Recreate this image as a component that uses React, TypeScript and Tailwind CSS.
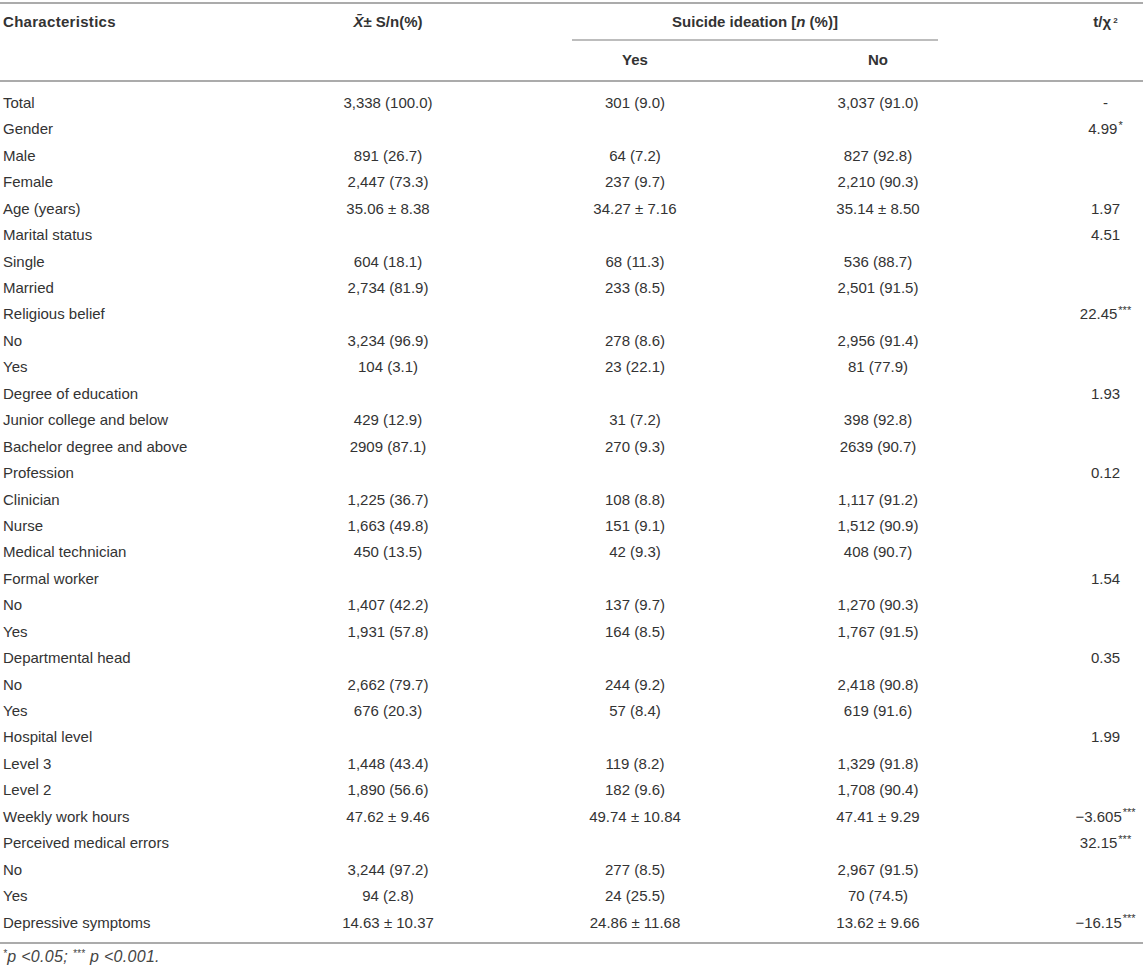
import React from 'react'

type Row = [string, string, string, string, string]

const rows: Row[] = [
  ['Total', '3,338 (100.0)', '301 (9.0)', '3,037 (91.0)', '-'],
  ['Gender', '', '', '', '4.99*'],
  ['Male', '891 (26.7)', '64 (7.2)', '827 (92.8)', ''],
  ['Female', '2,447 (73.3)', '237 (9.7)', '2,210 (90.3)', ''],
  ['Age (years)', '35.06 ± 8.38', '34.27 ± 7.16', '35.14 ± 8.50', '1.97'],
  ['Marital status', '', '', '', '4.51'],
  ['Single', '604 (18.1)', '68 (11.3)', '536 (88.7)', ''],
  ['Married', '2,734 (81.9)', '233 (8.5)', '2,501 (91.5)', ''],
  ['Religious belief', '', '', '', '22.45***'],
  ['No', '3,234 (96.9)', '278 (8.6)', '2,956 (91.4)', ''],
  ['Yes', '104 (3.1)', '23 (22.1)', '81 (77.9)', ''],
  ['Degree of education', '', '', '', '1.93'],
  ['Junior college and below', '429 (12.9)', '31 (7.2)', '398 (92.8)', ''],
  ['Bachelor degree and above', '2909 (87.1)', '270 (9.3)', '2639 (90.7)', ''],
  ['Profession', '', '', '', '0.12'],
  ['Clinician', '1,225 (36.7)', '108 (8.8)', '1,117 (91.2)', ''],
  ['Nurse', '1,663 (49.8)', '151 (9.1)', '1,512 (90.9)', ''],
  ['Medical technician', '450 (13.5)', '42 (9.3)', '408 (90.7)', ''],
  ['Formal worker', '', '', '', '1.54'],
  ['No', '1,407 (42.2)', '137 (9.7)', '1,270 (90.3)', ''],
  ['Yes', '1,931 (57.8)', '164 (8.5)', '1,767 (91.5)', ''],
  ['Departmental head', '', '', '', '0.35'],
  ['No', '2,662 (79.7)', '244 (9.2)', '2,418 (90.8)', ''],
  ['Yes', '676 (20.3)', '57 (8.4)', '619 (91.6)', ''],
  ['Hospital level', '', '', '', '1.99'],
  ['Level 3', '1,448 (43.4)', '119 (8.2)', '1,329 (91.8)', ''],
  ['Level 2', '1,890 (56.6)', '182 (9.6)', '1,708 (90.4)', ''],
  ['Weekly work hours', '47.62 ± 9.46', '49.74 ± 10.84', '47.41 ± 9.29', '−3.605***'],
  ['Perceived medical errors', '', '', '', '32.15***'],
  ['No', '3,244 (97.2)', '277 (8.5)', '2,967 (91.5)', ''],
  ['Yes', '94 (2.8)', '24 (25.5)', '70 (74.5)', ''],
  ['Depressive symptoms', '14.63 ± 10.37', '24.86 ± 11.68', '13.62 ± 9.66', '−16.15***'],
]

function Stat({ value }: { value: string }) {
  const m = value.match(/^(.*?)(\**)$/)
  const num = m ? m[1] : value
  const stars = m ? m[2] : ''
  return (
    <span className='whitespace-nowrap'>
      {num}
      {stars && <sup className='text-[11px] ml-[1px]'>{stars}</sup>}
    </span>
  )
}

function App() {
  return (
    <div className="w-[1143px] h-[970px] bg-white text-[#333] text-[15px] font-['Liberation_Sans',Arial,sans-serif]">
      <div className='h-[2px] mt-[2px] bg-[#ababab]' />

      {/* header */}
      <div className='grid grid-cols-[268px_240px_486px_1fr] h-[37px] font-bold leading-[18px]'>
        <div className='pl-[3px] pt-[9px] tracking-[0.3px]'>Characteristics</div>
        <div className='pt-[9px] text-center'>
          <span className='italic'>X̄</span>± S/n(%)
        </div>
        <div className='flex flex-col pt-[9px]'>
          <div className='text-center ml-[64px] mr-[56px]'>
            Suicide ideation [<span className='italic'>n</span> (%)]
          </div>
          <div className='h-[2px] mt-[8px] ml-[64px] mr-[56px] bg-[#bdbdbd]' />
        </div>
        <div className='pt-[9px] pl-[74px] flex justify-center'>
          <span>t/χ<sup className='text-[8px] ml-[2px]'>2</sup></span>
        </div>
      </div>
      <div className='grid grid-cols-[268px_240px_254px_232px_1fr] h-[39px] items-center font-bold'>
        <div />
        <div />
        <div className='text-center'>Yes</div>
        <div className='text-center'>No</div>
        <div />
      </div>
      <div className='h-[2px] bg-[#ababab]' />

      {/* body */}
      <div className='pt-[8px] pb-[6px]'>
        {rows.map((row, index) => (
          <div key={index} className='grid grid-cols-[268px_240px_254px_232px_1fr] h-[26.45px] items-center'>
            <div className='pl-[3px] whitespace-nowrap'>{row[0]}</div>
            <div className='text-center'>{row[1]}</div>
            <div className='text-center'>{row[2]}</div>
            <div className='text-center'>{row[3]}</div>
            <div className='pl-[74px] flex justify-center'>
              {row[4] && <Stat value={row[4]} />}
            </div>
          </div>
        ))}
      </div>
      <div className='h-[2px] bg-[#ababab]' />

      <div className='mt-[4px] pl-[3px] text-[16px] leading-[17px] italic text-[#444] tracking-[0.3px]'>
        <sup className='text-[10px]'>*</sup>p &lt;0.05; <sup className='text-[10px]'>***</sup> p &lt;0.001.
      </div>
    </div>
  )
}

export default App
